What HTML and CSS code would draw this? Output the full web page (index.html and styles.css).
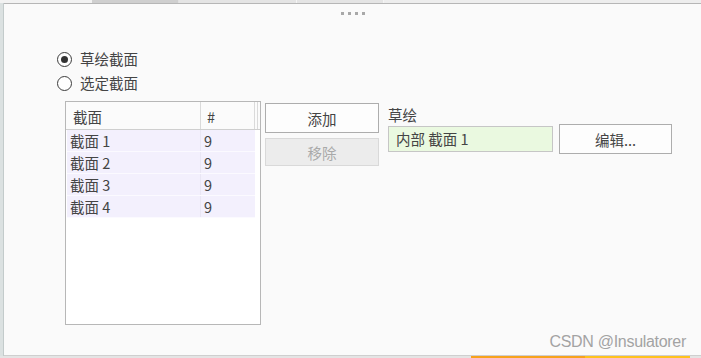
FILE: index.html
```html
<!DOCTYPE html>
<html lang="zh">
<head>
<meta charset="utf-8">
<link rel="stylesheet" href="styles.css">
</head>
<body>
<div class="top">
  <span class="seg seg-a"></span>
  <span class="seg seg-b"></span>
  <span class="seg seg-c"></span>
  <span class="seg seg-d"></span>
  <span class="seg seg-e"></span>
</div>
<div class="frame">
  <div class="side"></div>
  <div class="dialog">
    <div class="grip"><i></i><i></i><i></i><i></i></div>
    <div class="radios">
      <label class="radio-row"><span class="radio checked"></span><span>草绘截面</span></label>
      <label class="radio-row"><span class="radio"></span><span>选定截面</span></label>
    </div>
    <div class="main">
      <div class="list">
        <div class="list-head">
          <div class="hc hc-name">截面</div>
          <div class="hc hc-num">#</div>
          <div class="hc hc-fill"></div>
        </div>
        <div class="list-row"><div class="c-name">截面 1</div><div class="c-num">9</div></div>
        <div class="list-row"><div class="c-name">截面 2</div><div class="c-num">9</div></div>
        <div class="list-row"><div class="c-name">截面 3</div><div class="c-num">9</div></div>
        <div class="list-row"><div class="c-name">截面 4</div><div class="c-num">9</div></div>
      </div>
      <div class="btns">
        <div class="btn btn-add">添加</div>
        <div class="btn btn-disabled">移除</div>
      </div>
      <div class="sketch">
        <div class="sketch-label">草绘</div>
        <div class="sketch-row">
          <div class="field">内部 截面 1</div>
          <div class="btn btn-edit">编辑...</div>
        </div>
      </div>
    </div>
    <div class="watermark">CSDN @Insulatorer</div>
  </div>
</div>
<div class="bottom">
  <span class="b-orange"></span>
  <span class="b-yellow"></span>
</div>
</body>
</html>
```
FILE: styles.css
```css
html, body {
  margin: 0;
  padding: 0;
}
body {
  width: 701px;
  height: 358px;
  overflow: hidden;
  background: #ececec;
  font-family: "Noto Sans CJK SC", "Noto Sans", sans-serif;
  color: #444;
}
.top {
  display: flex;
  height: 3px;
  background: #f0f0f0;
}
.seg { display: block; height: 3px; }
.seg-a { width: 92px; background: #f2f2f2; }
.seg-b { width: 86px; background: #cfcfcf; border-right: 1px solid #e0e0e0; }
.seg-c { width: 117px; background: #e4e4e4; border-right: 1px solid #f4f4f4; }
.seg-d { width: 86px; background: #e4e4e4; border-right: 1px solid #f4f4f4; }
.seg-e { flex: 1; background: #ededed; }

.frame {
  display: flex;
  height: 353px;
}
.side {
  width: 3px;
  background: #dbe1e1;
  border-right: 1px solid #c3cbcb;
}
.dialog {
  flex: 1;
  position: relative;
  display: flex;
  flex-direction: column;
  background: #fafafa;
  border-top: 1px solid #b6b6b6;
  border-bottom: 1px solid #cfcfcf;
  padding-left: 53px;
}
.grip {
  display: flex;
  justify-content: center;
  gap: 4px;
  margin: 8px 0 0 -53px;
}
.grip i {
  display: block;
  width: 3px;
  height: 3px;
  background: #a8a8a8;
}
.radios {
  display: flex;
  flex-direction: column;
  gap: 6px;
  margin-top: 35px;
}
.radio-row {
  display: flex;
  align-items: center;
  height: 18px;
  font-size: 14.5px;
  line-height: 18px;
  color: #444;
}
.radio {
  box-sizing: border-box;
  width: 15px;
  height: 15px;
  border: 1px solid #3c3c3c;
  border-radius: 50%;
  background: #fff;
  margin-right: 8px;
  display: flex;
  align-items: center;
  justify-content: center;
}
.radio.checked::after {
  content: "";
  width: 7px;
  height: 7px;
  border-radius: 50%;
  background: #333;
}
.main {
  display: flex;
  align-items: flex-start;
  margin: 9px 0 0 8px;
}
.list {
  box-sizing: border-box;
  width: 196px;
  height: 224px;
  border: 1px solid #b7b7b7;
  background: #fff;
}
.list-head {
  display: flex;
  height: 27px;
  border-bottom: 1px solid #cfcfcf;
  background: #fbfbfb;
  font-size: 14.5px;
  line-height: 30px;
}
.hc-name {
  box-sizing: border-box;
  width: 135px;
  padding-left: 7px;
  border-right: 1px solid #dadada;
}
.hc-num {
  box-sizing: border-box;
  width: 54px;
  padding-left: 6px;
  border-right: 1px solid #dadada;
}
.hc-fill {
  width: 2px;
  border-right: 1px solid #dadada;
}
.list-row {
  display: flex;
  height: 21px;
  margin-left: 1px;
  width: 188px;
  background: #f3f0fd;
  border-bottom: 1px solid #fbfaff;
  font-size: 14.5px;
  line-height: 21px;
  color: #444;
}
.c-name {
  box-sizing: border-box;
  width: 134px;
  padding-left: 3px;
  border-right: 1px solid #e9e6f4;
}
.c-num {
  padding-left: 3px;
}
.btns {
  display: flex;
  flex-direction: column;
  gap: 5px;
  margin: 2px 0 0 4px;
}
.btn {
  box-sizing: border-box;
  display: flex;
  align-items: center;
  justify-content: center;
  font-size: 14.5px;
  border: 1px solid #adadad;
  background: #fdfdfd;
  color: #444;
}
.btn-add {
  width: 114px;
  height: 30px;
}
.btn-disabled {
  width: 114px;
  height: 28px;
  background: #ececec;
  border-color: #d9d9d9;
  color: #a9a9a9;
}
.sketch {
  margin-left: 9px;
}
.sketch-label {
  margin-top: 5px;
  height: 18px;
  line-height: 18px;
  font-size: 14.5px;
  color: #444;
}
.sketch-row {
  display: flex;
  align-items: center;
  gap: 6px;
}
.field {
  box-sizing: border-box;
  width: 165px;
  height: 26px;
  border: 1px solid #c6c6c6;
  background: #eaf9e0;
  padding-left: 7px;
  font-size: 14.5px;
  line-height: 24px;
  color: #444;
}
.btn-edit {
  width: 113px;
  height: 30px;
}
.watermark {
  position: absolute;
  right: 15px;
  top: 329px;
  font-family: "Liberation Sans", Arial, sans-serif;
  font-size: 16px;
  letter-spacing: -0.3px;
  color: #a3a3a3;
}
.bottom {
  display: flex;
  height: 2px;
  background: #e4e4e4;
  padding-left: 471px;
}
.b-orange { display: block; width: 114px; background: #f7a21c; }
.b-yellow { display: block; width: 105px; background: #ffc21d; }
```
